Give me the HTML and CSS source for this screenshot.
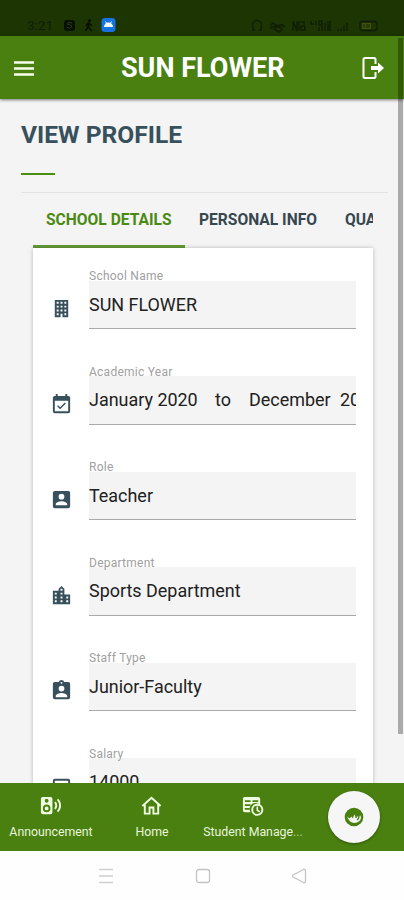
FILE: index.html
```html
<!DOCTYPE html>
<html lang="en">
<head>
<meta charset="utf-8">
<title>View Profile</title>
<link rel="stylesheet" href="styles.css">
</head>
<body>
<div class="status">
  <span class="clock">3:21</span>
  <svg class="status-left" width="56" height="18" viewBox="0 0 56 18">
    <rect x="1" y="4" width="11" height="11" rx="3" fill="#071002"/>
    <path d="M9 7Q4 5.500 4.500 8.500Q9 8.500 8.500 11Q7 13 4 11.500" fill="none" stroke="#294115"/>
    <circle cx="26.500" cy="4.500" r="1.600" fill="#071002"/>
    <path d="M26 6L25.500 11L28.500 15M25.500 10L22.500 15M26 7L29 10M25 7L23 10" fill="none" stroke="#071002" stroke-width="1.500"/>
    <rect x="38.500" y="2" width="14" height="14" rx="3.500" fill="#1673df"/>
    <path d="M41 11A4.500 4.500 0 0 1 50 11Z" fill="#f1faff"/>
    <path d="M42.500 5.500L44 8M48.500 5.500L47 8" stroke="#f1faff"/>
  </svg>
  <svg class="status-right" width="132" height="18" viewBox="0 0 132 18">
    <g fill="none" stroke="#0f1e04" stroke-width="1.400">
      <path d="M2.500 11V8A4.500 4.500 0 0 1 11.500 8V11M3 10V13H5M11 10V13H9"/>
      <path d="M20 9L23 6L32 12L29 15L24 12L33 7M20 11L25 9L31 8L35 10"/>
      <path d="M43 14V4L47 14V4M49 4V14M51 5H54V9H51V13H55V9"/>
      <path d="M61 4V7H64M66 4V8M69 4H72V8H69ZM69 14V10M72 14V9M75 14V6M78 14V4M80 14V4"/>
      <path d="M88 14V12M91 14V11M94 14V9M97 14V6"/>
      <rect x="110" y="4.500" width="17" height="9" rx="2.500"/>
    </g>
    <rect x="112" y="6" width="9" height="6" fill="#3f5010"/>
    <path d="M114 7V11M117 7V11M119 7V11" stroke="#172804"/>
  </svg>
</div>
<header class="topbar">
  <svg class="menu" width="20" height="16" viewBox="0 0 20 16"><path d="M0 2.500H20M0 8.500H20M0 14.500H20" stroke="#f5ffea" stroke-width="2.600"/></svg>
  <h1>SUN FLOWER</h1>
  <svg class="logout" width="24" height="24" viewBox="0 0 24 24"><path d="M14.500 8V3.500Q14.500 2 13 2H4Q2.500 2 2.500 3.500V20.500Q2.500 22 4 22H13Q14.500 22 14.500 20.500V16" fill="none" stroke="#fff" stroke-width="2"/><path d="M10 10H17V6.500L23 12L17 17.500V14H10Z" fill="#fff"/></svg>
</header>
<main class="page">
  <h2>VIEW PROFILE</h2>
  <div class="accent"></div>
  <div class="rule"></div>
  <nav class="tabs">
    <span class="tab tab-active">SCHOOL DETAILS</span>
    <span class="tab tab-info">PERSONAL INFO</span>
    <span class="tab tab-last">QUALIFICATION</span>
  </nav>
  <section class="card">
    <div class="row">
      <svg class="icon" viewBox="0 0 24 24"><path d="M5 3V21H11V17.500H13V21H19V3H5M7 5H9V7H7V5M11 5H13V7H11V5M15 5H17V7H15V5M7 9H9V11H7V9M11 9H13V11H11V9M15 9H17V11H15V9M7 13H9V15H7V13M11 13H13V15H11V13M15 13H17V15H15V13M7 17H9V19H7V17M15 17H17V19H15V17Z"/></svg>
      <div class="field"><label>School Name</label><div class="value">SUN FLOWER</div></div>
    </div>
    <div class="row">
      <svg class="icon" viewBox="0 0 24 24"><path d="M19 19H5V8H19M19 3H18V1H16V3H8V1H6V3H5C3.890 3 3 3.900 3 5V19A2 2 0 0 0 5 21H19A2 2 0 0 0 21 19V5A2 2 0 0 0 19 3M16.530 11.060L15.470 10L10.590 14.880L8.470 12.760L7.410 13.820L10.590 17Z"/></svg>
      <div class="field"><label>Academic Year</label><div class="value year"><span>January 2020</span><span>to</span><span>December</span><span>2020</span></div></div>
    </div>
    <div class="row">
      <svg class="icon" viewBox="0 0 24 24"><path d="M6 17C6 15 10 13.900 12 13.900S18 15 18 17V18H6M15 9A3 3 0 0 1 12 12A3 3 0 0 1 9 9A3 3 0 0 1 12 6A3 3 0 0 1 15 9M3 5V19A2 2 0 0 0 5 21H19A2 2 0 0 0 21 19V5A2 2 0 0 0 19 3H5C3.890 3 3 3.900 3 5Z"/></svg>
      <div class="field"><label>Role</label><div class="value">Teacher</div></div>
    </div>
    <div class="row">
      <svg class="icon" viewBox="0 0 24 24"><path d="M19 15H17V13H19M19 19H17V17H19M13 7H11V5H13M13 11H11V9H13M13 15H11V13H13M13 19H11V17H13M7 11H5V9H7M7 15H5V13H7M7 19H5V17H7M15 11V5L12 2L9 5V7H3V21H21V11H15Z"/></svg>
      <div class="field"><label>Department</label><div class="value">Sports Department</div></div>
    </div>
    <div class="row">
      <svg class="icon" viewBox="0 0 24 24"><path d="M18 19H6V17.600C6 15.600 10 14.500 12 14.500S18 15.600 18 17.600M12 7A3 3 0 0 1 15 10A3 3 0 0 1 12 13A3 3 0 0 1 9 10A3 3 0 0 1 12 7M12 3A1 1 0 0 1 13 4A1 1 0 0 1 12 5A1 1 0 0 1 11 4A1 1 0 0 1 12 3M19 3H14.820C14.400 1.840 13.300 1 12 1S9.600 1.840 9.180 3H5A2 2 0 0 0 3 5V19A2 2 0 0 0 5 21H19A2 2 0 0 0 21 19V5A2 2 0 0 0 19 3Z"/></svg>
      <div class="field"><label>Staff Type</label><div class="value">Junior-Faculty</div></div>
    </div>
    <div class="row">
      <svg class="icon" viewBox="0 0 24 24"><path d="M5 4H19A2 2 0 0 1 21 6V19H3V6A2 2 0 0 1 5 4M5 6V17H19V6Z"/></svg>
      <div class="field"><label>Salary</label><div class="value">14000</div></div>
    </div>
  </section>
</main>
<nav class="bottom">
  <div class="item">
    <svg width="23" height="23" viewBox="0 0 24 24"><path fill="#f0ffe2" fill-rule="evenodd" d="M20.070 19.070L18.660 17.660C20.110 16.220 21 14.210 21 12C21 9.780 20.110 7.780 18.660 6.340L20.070 4.930C21.880 6.740 23 9.240 23 12C23 14.760 21.880 17.260 20.070 19.070M17.240 16.240L15.830 14.830C16.550 14.110 17 13.110 17 12C17 10.890 16.550 9.890 15.830 9.170L17.240 7.760C18.330 8.850 19 10.350 19 12C19 13.650 18.330 15.150 17.240 16.240M4 3H12A2 2 0 0 1 14 5V19A2 2 0 0 1 12 21H4A2 2 0 0 1 2 19V5A2 2 0 0 1 4 3M8 5A2 2 0 0 0 8 9A2 2 0 0 0 8 5M8 11A4 4 0 0 0 8 19A4 4 0 0 0 8 11M8 13A2 2 0 0 1 8 17A2 2 0 0 1 8 13Z"/></svg>
    <span class="name">Announcement</span>
  </div>
  <div class="item">
    <svg width="23" height="23" viewBox="0 0 24 24"><path d="M5 11V20.500H10V14H14V20.500H19V11M2.500 12.500L12 4L21.500 12.500" fill="none" stroke="#f0ffe2" stroke-width="2"/></svg>
    <span class="name">Home</span>
  </div>
  <div class="item">
    <svg width="23" height="23" viewBox="0 0 24 24"><path d="M4 3H18A2 2 0 0 1 20 5V12A6 6 0 0 0 10 19H4A2 2 0 0 1 2 17V5A2 2 0 0 1 4 3Z" fill="#f0ffe2"/><path d="M4 7.500H10M12 7.500H18M4 11.500H10M12 11.500H16M4 15.500H9" stroke="#4a8010" stroke-width="1.800"/><circle cx="17" cy="16.500" r="5.300" fill="#4a8010" stroke="#f0ffe2" stroke-width="2"/><path d="M17 13V17L19.500 18.500" fill="none" stroke="#f0ffe2" stroke-width="1.600"/></svg>
    <span class="name">Student Manage<i>...</i></span>
  </div>
  <div class="fab">
    <svg width="22" height="22" viewBox="0 0 22 22"><circle cx="11" cy="11" r="9.300" fill="#4a8010"/><path d="M4.200 10.500L6.500 12.500L8.500 10.500L9.500 12.500L11.500 8.500L13 11L17.500 9.500L18 12Q17 16.500 11.500 17Q6 16.500 4.200 10.500Z" fill="#f6f6f6"/><path d="M13 9V12M16 9.500Q16 13 14 14" fill="none" stroke="#4a8010" stroke-width="1.300"/></svg>
  </div>
</nav>
<div class="system">
  <svg width="16" height="16" viewBox="0 0 16 16"><path d="M1 1.500H15M1 8H15M1 14.500H15" stroke="#d0d0d0" stroke-width="1.300"/></svg>
  <svg width="16" height="16" viewBox="0 0 16 16"><rect x="1.500" y="1.500" width="13" height="13" rx="2.500" fill="none" stroke="#c4c4c4" stroke-width="1.300"/></svg>
  <svg width="16" height="16" viewBox="0 0 16 16"><path d="M2 7Q1 8 2 9L12.500 14.500Q14.500 15 14.500 13V3Q14.500 1 12.500 1.500Z" fill="none" stroke="#c4c4c4" stroke-width="1.300"/></svg>
</div>
<div class="scrollbar"></div>
</body>
</html>
```

FILE: styles.css
```css
* { box-sizing: border-box; }
body {
  margin: 0;
  width: 404px;
  height: 900px;
  display: flex;
  flex-direction: column;
  overflow: hidden;
  position: relative;
  font-family: Roboto, "Liberation Sans", sans-serif;
  background: #f4f4f4;
}
svg { display: block; flex: none; }
h1, h2 { margin: 0; white-space: nowrap; }
.status {
  height: 36px;
  flex: none;
  display: flex;
  align-items: flex-end;
  background: #1c3502;
}
.clock { width: 35px; margin-left: 27px; font-size: 13.500px; line-height: 22px; color: #0f1e04; }
.status-left { margin-bottom: 2px; margin-left: 1px; }
.status-right { margin-left: auto; margin-bottom: 1px; margin-right: 22px; }
.topbar {
  height: 63px;
  flex: none;
  display: flex;
  align-items: center;
  padding: 0 19px 0 14px;
  background: #4a8010;
  box-shadow: 0 1px 3px rgba(0,0,0,.5);
  z-index: 1;
}
.topbar h1 { margin-left: 87px; font-size: 27px; font-weight: 700; color: #fff; line-height: 32px; }
.logout { margin-left: auto; }
.page { flex: 1; min-height: 0; overflow: hidden; display: flex; flex-direction: column; padding: 0 16px 0 21px; }
.page h2 { margin-top: 20px; font-size: 24.600px; line-height: 32px; font-weight: 700; color: #37505c; }
.accent { width: 34px; height: 2px; margin-top: 21.500px; flex: none; background: #4a8f14; }
.rule { height: 1px; margin-top: 17px; flex: none; background: #e3e3e3; }
.tabs { display: flex; flex: none; height: 55.500px; margin: 0 15px 0 12px; overflow: hidden; white-space: nowrap; font-size: 15.600px; font-weight: 700; line-height: 55px; color: #37474f; }
.tab { flex: none; }
.tab-active { width: 152px; padding-left: 13px; color: #4a8a12; border-bottom: 3px solid #659b36; }
.tab-info { width: 146px; padding-left: 14px; }
.tab-last { padding-left: 14px; }
.card { flex: none; margin: 0 15px 0 11.500px; padding: 20px 17px 0 17px; background: #fff; box-shadow: 0 0 4px rgba(0,0,0,.25); }
.row { display: flex; height: 95.600px; }
.icon { width: 23px; height: 23px; margin: 29px 16.500px 0 0; fill: #37505c; fill-rule: evenodd; }
.field { flex: 1; min-width: 0; }
.field label { display: block; height: 12.500px; font-size: 12px; line-height: 17px; letter-spacing: .250px; color: #a0a0a0; white-space: nowrap; }
.value { height: 48.500px; border-bottom: 1.500px solid #a9a9a9; background: #f4f4f4; font-size: 17.950px; line-height: 47.500px; color: #212121; white-space: nowrap; overflow: hidden; }
.year { display: flex; }
.year span { flex: none; }
.year span:nth-child(1) { width: 126px; }
.year span:nth-child(2) { width: 34px; }
.year span:nth-child(3) { width: 91px; }
.bottom { position: relative; height: 68px; flex: none; display: flex; background: #4a8010; z-index: 1; }
.item { width: 101px; display: flex; flex-direction: column; align-items: center; padding-top: 11px; font-size: 12.300px; color: #e9f6dc; white-space: nowrap; }
.name { line-height: 18px; margin-top: 6px; padding-left: 1px; }
.name i { font-style: normal; opacity: .6; }
.fab { width: 52px; height: 52px; margin: 8px 0 0 25px; border-radius: 50%; background: #f6f6f6; display: flex; align-items: center; justify-content: center; box-shadow: 0 1px 3px rgba(0,0,0,.35); }
.system { height: 49px; flex: none; display: flex; align-items: center; padding-left: 98px; gap: 80.500px; background: #fefefe; }
.scrollbar { position: absolute; z-index: 2; left: 398px; top: 38px; width: 5px; height: 696px; background: rgba(0,0,0,.3); }
```
